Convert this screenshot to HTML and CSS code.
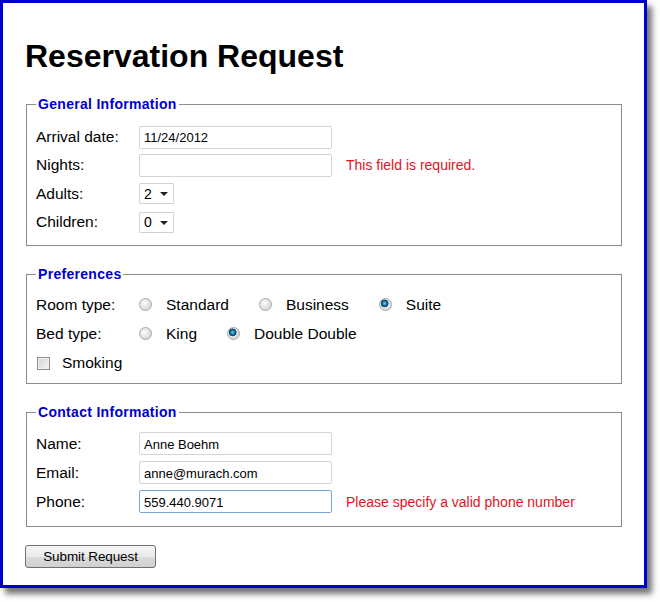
FILE: index.html
```html
<!DOCTYPE html>
<html>
<head>
<meta charset="utf-8">
<title>Reservation Request</title>
<link rel="stylesheet" href="styles.css">
</head>
<body>
<div class="frame">
  <h1>Reservation Request</h1>
  <form>
    <fieldset class="fs fs-general">
      <legend>General Information</legend>
      <div class="row r28">
        <label class="lbl">Arrival date:</label>
        <input class="txt" type="text" value="11/24/2012">
      </div>
      <div class="row r28">
        <label class="lbl">Nights:</label>
        <input class="txt" type="text" value="">
        <span class="err">This field is required.</span>
      </div>
      <div class="row r29">
        <label class="lbl">Adults:</label>
        <span class="sel"><select><option>2</option></select></span>
      </div>
      <div class="row r28">
        <label class="lbl">Children:</label>
        <span class="sel"><select><option>0</option></select></span>
      </div>
    </fieldset>

    <fieldset class="fs fs-pref">
      <legend>Preferences</legend>
      <div class="row r29">
        <label class="lbl">Room type:</label>
        <input class="radio" type="radio" name="room"><span class="opt">Standard</span>
        <input class="radio" type="radio" name="room"><span class="opt">Business</span>
        <input class="radio" type="radio" name="room" checked><span class="opt">Suite</span>
      </div>
      <div class="row r29">
        <label class="lbl">Bed type:</label>
        <input class="radio" type="radio" name="bed"><span class="opt">King</span>
        <input class="radio" type="radio" name="bed" checked><span class="opt">Double Double</span>
      </div>
      <div class="row r30">
        <input class="check" type="checkbox"><span class="chk-text">Smoking</span>
      </div>
    </fieldset>

    <fieldset class="fs fs-contact">
      <legend>Contact Information</legend>
      <div class="row r29">
        <label class="lbl">Name:</label>
        <input class="txt" type="text" value="Anne Boehm">
      </div>
      <div class="row r29">
        <label class="lbl">Email:</label>
        <input class="txt" type="text" value="anne@murach.com">
      </div>
      <div class="row r29">
        <label class="lbl">Phone:</label>
        <input class="txt focus" type="text" value="559.440.9071">
        <span class="err">Please specify a valid phone number</span>
      </div>
    </fieldset>

    <button class="submit" type="button">Submit Request</button>
  </form>
</div>
</body>
</html>
```

FILE: styles.css
```css
html, body {
  margin: 0;
  padding: 0;
  background: #fff;
}
body {
  font-family: "Liberation Sans", Arial, sans-serif;
  color: #000;
  width: 660px;
  height: 602px;
  overflow: hidden;
}
.frame {
  box-sizing: border-box;
  width: 647px;
  height: 588px;
  border: 3px solid #0000cc;
  background: #fff;
  padding: 35px 22px 0 22px;
  box-shadow: 5px 6px 6px rgba(0,0,0,0.55);
}
h1 {
  margin: 0;
  font-size: 32px;
  line-height: 37px;
  font-weight: bold;
}
form { margin: 0; }
.fs {
  margin: 21px 0 0 1px;
  padding: 0 9px 9px 9px;
  border: 1px solid #8c8c8c;
  border-radius: 0;
  min-width: 0;
}
.fs legend {
  padding: 0 2px;
  margin: 0;
  color: #0000cc;
  font-weight: bold;
  font-size: 14px;
  line-height: 17px;
  letter-spacing: 0.3px;
}
.fs-general { padding-top: 10px; padding-bottom: 9px; }
.fs-pref { margin-top: 20px; padding-top: 7px; padding-bottom: 5px; }
.fs-contact { margin-top: 20px; padding-top: 8px; padding-bottom: 10px; }

.row {
  display: flex;
  align-items: center;
  font-size: 15.5px;
}
.r28 { height: 28px; }
.r29 { height: 29px; }
.r30 { height: 30px; }
.lbl {
  width: 103px;
  flex: none;
}
.txt {
  box-sizing: border-box;
  width: 193px;
  height: 23px;
  margin: 0;
  padding: 1px 4px 0 4px;
  border: 1px solid #d4d4d4;
  border-radius: 2px;
  font-family: "Liberation Sans", Arial, sans-serif;
  font-size: 13px;
  color: #000;
  background: #fff;
  outline: none;
}
.txt.focus {
  border-color: #7aa7cf;
}
.err {
  margin-left: 14px;
  color: #e0141e;
  font-size: 14px;
}
.sel {
  position: relative;
  display: inline-block;
  width: 35px;
  height: 21px;
}
.sel select {
  appearance: none;
  -webkit-appearance: none;
  box-sizing: border-box;
  width: 35px;
  height: 21px;
  margin: 0;
  padding: 0 0 0 4px;
  border: 1px solid #d2d2d2;
  border-radius: 1px;
  background: #fff;
  font-family: "Liberation Sans", Arial, sans-serif;
  font-size: 14px;
  color: #000;
}
.sel::after {
  content: "";
  position: absolute;
  left: 21px;
  top: 9px;
  border-left: 4px solid transparent;
  border-right: 4px solid transparent;
  border-top: 4px solid #222;
  pointer-events: none;
}
.radio {
  appearance: none;
  -webkit-appearance: none;
  box-sizing: border-box;
  width: 13px;
  height: 13px;
  margin: 0 0 0 0;
  border-radius: 50%;
  border: 1px solid #a6a6a6;
  background: radial-gradient(circle at 40% 40%, #fbfbfb 0, #e6e6e6 45%, #c8c8c8 100%);
  flex: none;
}
.radio:checked {
  background:
    radial-gradient(circle at 42% 40%, #7fd0f0 0, #2a8cc0 1.5px, #0c4f78 3px, #0c4f78 3.6px, transparent 4.2px),
    radial-gradient(circle at 40% 40%, #fbfbfb 0, #e6e6e6 45%, #c8c8c8 100%);
}
.opt {
  margin-left: 14px;
  margin-right: 30px;
}
.check {
  appearance: none;
  -webkit-appearance: none;
  box-sizing: border-box;
  width: 13px;
  height: 13px;
  margin: 0 0 0 1px;
  border: 1px solid #8e8e8e;
  box-shadow: inset 0 0 0 1px #f2f2f2;
  background: linear-gradient(135deg, #d2d2d2, #f6f6f6);
  flex: none;
}
.chk-text {
  margin-left: 12px;
}
.submit {
  display: block;
  box-sizing: border-box;
  width: 131px;
  height: 23px;
  margin: 18px 0 0 0;
  padding: 0;
  border: 1px solid #707070;
  border-radius: 3px;
  background: linear-gradient(#f4f4f4 0, #ebebeb 50%, #dcdcdc 51%, #d0d0d0 100%);
  font-family: "Liberation Sans", Arial, sans-serif;
  font-size: 13.5px;
  color: #000;
  letter-spacing: -0.1px;
}
```
